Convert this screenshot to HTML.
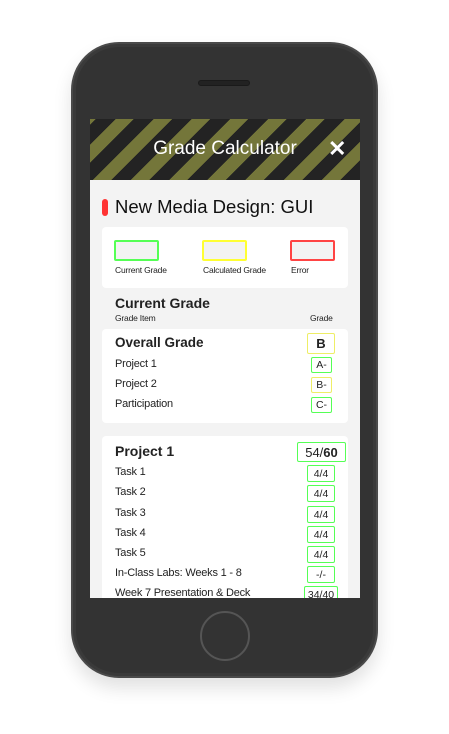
<!DOCTYPE html>
<html><head><style>
*{margin:0;padding:0;box-sizing:border-box}
body{width:449px;height:734px;background:#fff;position:relative;overflow:hidden;font-family:"Liberation Sans",sans-serif;color:#222}
.phone{position:absolute;left:71px;top:42px;width:307px;height:636px;border-radius:48px;background:#333;border:2px solid #4a4a4a;box-shadow:0 10px 18px rgba(0,0,0,.12),inset 0 0 0 3px #3a3a3a}
.spk{position:absolute;left:198px;top:80px;width:52px;height:6px;border-radius:3px;background:#222;border:1px solid #1a1a1a}
.home{position:absolute;left:200px;top:611px;width:50px;height:50px;border-radius:50%;border:2px solid #555;background:#333}
.screen{position:absolute;left:90px;top:119px;width:270px;height:479px;background:#f3f3f3;overflow:hidden}
.hdr{position:absolute;left:0;top:0;width:270px;height:61px;background:repeating-linear-gradient(-45deg,#232323 0 14px,#74763a 14px 27px)}
.hdr h1{position:absolute;left:0;width:270px;top:19px;text-align:center;color:#fff;font-size:19px;font-weight:normal}
.x{position:absolute;left:238px;top:17px;color:#fff;font-size:22px;font-weight:bold}
.abs{position:absolute}
.card{position:absolute;background:#fff;border-radius:4px;left:12px;width:246px}
.t{position:absolute;font-size:11px;letter-spacing:-0.2px;white-space:nowrap}
.b{position:absolute;border:1.5px solid #5f5;border-radius:2px;font-size:10.5px;display:flex;align-items:center;justify-content:center;background:#fff}
</style></head><body>
<div class="phone"></div>
<div class="spk"></div>
<div class="home"></div>
<div class="screen">
<div class="hdr"><h1>Grade Calculator</h1><div class="x">✕</div></div>
<div class="abs" style="left:12px;top:80px;width:6px;height:17px;background:#f33;border-radius:3px"></div>
<div class="abs" style="left:25px;top:77px;font-size:18.5px;color:#111">New Media Design: GUI</div>
<div class="card" style="top:108px;height:61px">
 <div class="abs" style="left:12px;top:13px;width:45px;height:21px;border:2px solid #5f5;border-radius:2px;background:#f3f3f3"></div>
 <div class="abs" style="left:100px;top:13px;width:45px;height:21px;border:2px solid #ff3;border-radius:2px;background:#f3f3f3"></div>
 <div class="abs" style="left:188px;top:13px;width:45px;height:21px;border:2px solid #f44;border-radius:2px;background:#f3f3f3"></div>
 <div class="t" style="left:13px;top:38px;font-size:8.5px">Current Grade</div>
 <div class="t" style="left:101px;top:38px;font-size:8.5px">Calculated Grade</div>
 <div class="t" style="left:189px;top:38px;font-size:8.5px">Error</div>
</div>
<div class="t" style="left:25px;top:176px;font-size:14px;font-weight:bold;letter-spacing:0">Current Grade</div>
<div class="t" style="left:25px;top:194px;font-size:8.5px">Grade Item</div>
<div class="t" style="left:220px;top:194px;font-size:8.5px">Grade</div>
<div class="card" style="top:210px;height:94px"></div>
<div class="t" style="left:25px;top:216px;font-size:13.5px;font-weight:bold;letter-spacing:0">Overall Grade</div>
<div class="b" style="left:217px;top:214px;width:28px;height:21px;border-color:#ee6;font-size:13px;font-weight:bold">B</div>
<div class="t" style="left:25px;top:239px">Project 1</div><div class="b" style="left:221px;top:238px;width:21px;height:16px">A-</div>
<div class="t" style="left:25px;top:259px">Project 2</div><div class="b" style="left:221px;top:258px;width:21px;height:16px;border-color:#ee6">B-</div>
<div class="t" style="left:25px;top:279px">Participation</div><div class="b" style="left:221px;top:278px;width:21px;height:16px">C-</div>
<div class="card" style="top:317px;height:170px"></div>
<div class="t" style="left:25px;top:324px;font-size:14px;font-weight:bold;letter-spacing:0">Project 1</div>
<div class="b" style="left:207px;top:323px;width:49px;height:20px;font-size:13px">54/<b>60</b></div>
<div class="t" style="left:25px;top:347px">Task 1</div><div class="b" style="left:217px;top:346px;width:28px;height:17px">4/4</div>
<div class="t" style="left:25px;top:367px">Task 2</div><div class="b" style="left:217px;top:366px;width:28px;height:17px">4/4</div>
<div class="t" style="left:25px;top:388px">Task 3</div><div class="b" style="left:217px;top:387px;width:28px;height:17px">4/4</div>
<div class="t" style="left:25px;top:408px">Task 4</div><div class="b" style="left:217px;top:407px;width:28px;height:17px">4/4</div>
<div class="t" style="left:25px;top:428px">Task 5</div><div class="b" style="left:217px;top:427px;width:28px;height:17px">4/4</div>
<div class="t" style="left:25px;top:448px">In-Class Labs: Weeks 1 - 8</div><div class="b" style="left:217px;top:447px;width:28px;height:17px">-/-</div>
<div class="t" style="left:25px;top:468px">Week 7 Presentation &amp; Deck</div><div class="b" style="left:214px;top:467px;width:34px;height:17px">34/40</div>
</div>
</body></html>
